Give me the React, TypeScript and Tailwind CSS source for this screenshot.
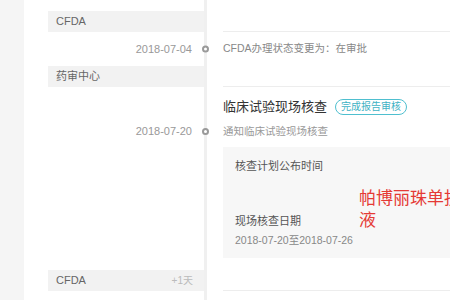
export default function App() {
  return (
    <div className="w-[450px] h-[300px] overflow-hidden bg-[#f5f5f5] flex font-['Liberation_Sans','Noto_Sans_CJK_SC',sans-serif] text-[11px]">
      <div className="w-[24px] shrink-0" />
      <div className="flex-1 bg-white flex flex-col">
        {/* top spacer */}
        <div className="flex h-[11px] shrink-0">
          <div className="w-[180px] shrink-0" />
          <div className="w-[3px] bg-[#f0f0f0] shrink-0" />
          <div className="flex-1" />
        </div>

        <GroupRow label="CFDA" />

        <div className="flex h-[34px] shrink-0">
          <div className="w-[180px] shrink-0 flex items-center justify-end pr-[12px] text-[#999]">2018-07-04</div>
          <Line dot />
          <div className="flex-1 pl-[16px] flex items-center text-[#888] text-[10.5px]">CFDA办理状态变更为：在审批</div>
        </div>

        <GroupRow label="药审中心" />

        <div className="flex h-[183px] shrink-0">
          <div className="w-[180px] shrink-0 pt-[36px] pr-[12px] text-right text-[#999] leading-[16px]">2018-07-20</div>
          <Line dot dotTop={41} />
          <div className="flex-1 pl-[16px] pt-[10px]">
            <div className="flex items-center gap-[8px] h-[20px]">
              <span className="text-[13px] text-[#333]">临床试验现场核查</span>
              <span className="h-[16px] px-[5px] rounded-full border border-[#4fbfcf] text-[#3fb2c4] text-[10px] leading-[14px] flex items-center">完成报告审核</span>
            </div>
            <div className="mt-[6px] leading-[16px] text-[#999] text-[10.5px]">通知临床试验现场核查</div>
            <div className="mt-[8px] w-[320px] h-[111px] bg-[#f7f7f7] pl-[12px] pt-[11px] pb-[10px] flex flex-col">
              <div className="leading-[16px] text-[#555]">核查计划公布时间</div>
              <div className="flex-1 flex items-end">
                <div className="w-[124px] shrink-0">
                  <div className="leading-[16px] text-[#555]">现场核查日期</div>
                  <div className="mt-[3px] leading-[16px] text-[#888] text-[10.5px] whitespace-nowrap">2018-07-20至2018-07-26</div>
                </div>
                <div className="self-start mt-[14px] w-[140px] text-[17px] leading-[22px] text-[#e53a35]">帕博丽珠单抗注射液</div>
              </div>
            </div>
          </div>
        </div>

        <GroupRow label="CFDA" extra="+1天" />

        <div className="flex flex-1">
          <div className="w-[180px] shrink-0" />
          <div className="w-[3px] bg-[#f0f0f0] shrink-0" />
          <div className="flex-1" />
        </div>
      </div>
    </div>
  );
}

function Line({ dot, dotTop }: { dot?: boolean; dotTop?: number }) {
  return (
    <div className="w-[3px] bg-[#f0f0f0] shrink-0 relative flex items-center justify-center">
      {dot && (
        <div
          className={
            "w-[7px] h-[7px] rounded-full border-2 border-[#9a9a9a] bg-white absolute left-[-2px] " +
            (dotTop ? "top-[41px]" : "top-1/2 -translate-y-1/2")
          }
        />
      )}
    </div>
  );
}

function GroupRow({ label, extra }: { label: string; extra?: string }) {
  return (
    <div className="flex h-[21px] shrink-0">
      <div className="w-[180px] shrink-0 pl-[24px]">
        <div className="h-full bg-[#f2f2f2] flex items-center justify-between pl-[8px] pr-[11px]">
          <span className="text-[#666]">{label}</span>
          {extra && <span className="text-[#bbb] text-[10px]">{extra}</span>}
        </div>
      </div>
      <div className="w-[3px] bg-[#f0f0f0] shrink-0" />
      <div className="flex-1 pl-[16px]">
        <div className="h-full border-b border-[#ededed]" />
      </div>
    </div>
  );
}
